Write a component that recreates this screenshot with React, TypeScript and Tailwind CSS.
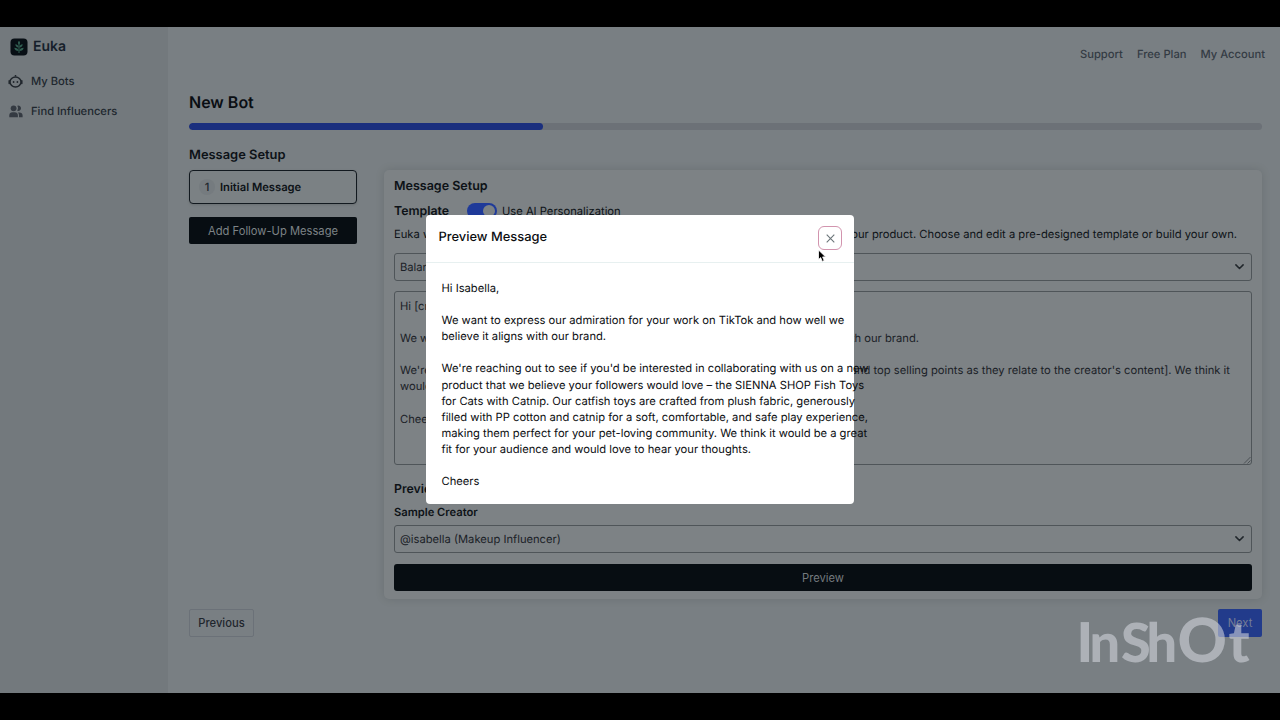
import React, { useState } from 'react';

const navLinks = ['Support', 'Free Plan', 'My Account'];

function LogoIcon() {
  return (
    <svg className="w-[18px] h-[18px]" viewBox="0 0 18 18" fill="none">
      <rect x="0.5" y="0.5" width="17" height="17" rx="4" fill="#080f15" />
      <path d="M9 15V4" stroke="#315f52" strokeWidth="1" />
      <path
        d="M9 2.8c1.3 1.3 1.3 2.6 0 4-1.3-1.4-1.3-2.7 0-4zM8.6 9.4C6.6 9.3 5.4 8.2 5.3 6.2c2 .1 3.2 1.2 3.3 3.2zM9.4 9.4c2-.1 3.2-1.2 3.3-3.2-2 .1-3.2 1.2-3.3 3.2zM8.6 13C6.2 13 4.7 11.9 4.3 9.7c2.4 0 4 1.1 4.3 3.3zM9.4 13c2.4 0 3.9-1.1 4.3-3.3-2.4 0-4 1.1-4.3 3.3z"
        fill="#315f52"
      />
    </svg>
  );
}

function BotIcon() {
  return (
    <svg className="w-[15px] h-[15px]" viewBox="0 0 15 15" fill="none" stroke="#20262c">
      <path d="M7.5 2.5V1" strokeWidth="1.5" />
      <ellipse cx="7.5" cy="8" rx="5.5" ry="5" strokeWidth="1.5" />
      <path d="M1.2 6.8v2.6M13.8 6.8v2.6" strokeWidth="1.5" strokeLinecap="round" />
      <circle cx="5.6" cy="8" r="0.9" fill="#20262c" stroke="none" />
      <circle cx="9.4" cy="8" r="0.9" fill="#20262c" stroke="none" />
    </svg>
  );
}

function PeopleIcon() {
  return (
    <svg className="w-[15px] h-[15px]" viewBox="0 0 15 15" fill="#343a42">
      <circle cx="5.6" cy="4.3" r="2.9" />
      <path d="M1.3 13.2v-1.7c0-2 1.3-3.2 3.2-3.2h2.2c1.9 0 3.2 1.2 3.2 3.2v1.7z" />
      <path d="M9.3 1.8a2.7 2.7 0 1 1 0 5 4.2 4.2 0 0 0 0-5z" />
      <path d="M9.9 8.400h1.400c2.100 0 3.300 1.200 3.300 3.100v1.700h-3.600v-1.700c0-1.300-.3-2.300-1.100-3.100z" />
    </svg>
  );
}

function Chevron() {
  return (
    <svg className="w-[9px] h-[6px]" viewBox="0 0 9 6" fill="none" stroke="#20262b" strokeWidth="1.5">
      <path d="M0.9 0.9 4.5 4.5 8.1 0.9" strokeLinecap="round" strokeLinejoin="round" />
    </svg>
  );
}

function SelectBox({ label }: { label: string }) {
  return (
    <div className="h-[28px] border border-[#4f5559] rounded-[3px] pl-[5px] pr-[7px] flex items-center justify-between text-[#1b2127]">
      <span>{label}</span>
      <Chevron />
    </div>
  );
}

function Sidebar() {
  return (
    <aside className="w-[168px] shrink-0 bg-[#73797d] text-[#20272e]">
      <div className="flex items-center gap-[5px] h-[40px] pl-[10px]">
        <LogoIcon />
        <span className="text-[14px] font-semibold text-[#161f2b]">Euka</span>
      </div>
      <nav className="font-medium">
        <a className="flex items-center gap-2 h-[30px] pl-[8px] -mt-px">
          <BotIcon />
          My Bots
        </a>
        <a className="flex items-center gap-2 h-[30px] pl-[8px]">
          <PeopleIcon />
          Find Influencers
        </a>
      </nav>
    </aside>
  );
}

function TemplateText() {
  return (
    <div className="relative h-[174px] mt-[10px] border border-[#4f5559] rounded-[3px] pl-[5px] pt-[6px] leading-[16.1px] text-[#1b2127] whitespace-nowrap">
      <p>Hi [creator name],</p>
      <br />
      <p className="flex justify-between w-[519px]">
        <span>We want to express our admiration for your work and how well</span>
        <span>it aligns with our brand.</span>
      </p>
      <br />
      <p className="flex justify-between w-[830px]">
        <span>We're reaching out to see if you'd be interested in collaborating with us on</span>
        <span>[product and top selling points as they relate to the creator's content]. We think it</span>
      </p>
      <p>would be a great fit for your audience.</p>
      <br />
      <p>Cheers</p>
      <svg className="absolute right-0 bottom-0 w-[8px] h-[8px]" viewBox="0 0 8 8" stroke="#3f4549" strokeWidth="0.8">
        <path d="M1 7.5 7.5 1M4.5 7.5l3-3" />
      </svg>
    </div>
  );
}

function PreviewModal({ onClose }: { onClose: () => void }) {
  return (
    <div className="absolute left-[426px] top-[215px] w-[428px] h-[289px] bg-white rounded-[4px] text-[#0b0d10]">
      <div className="h-[48px] border-b border-[#e7f0f0] flex items-center justify-between pl-[12.5px] pr-[12px]">
        <h3 className="text-[12.9px] font-medium -mt-0.5">Preview Message</h3>
        <button
          onClick={onClose}
          className="w-6 h-6 rounded-[6px] border-[1.5px] border-[#d294ae] flex items-center justify-center -mt-px"
        >
          <svg className="w-[9px] h-[9px]" viewBox="0 0 9 9" stroke="#6b7579" strokeWidth="1.1">
            <path d="M0.7 0.7 8.3 8.3M8.3 0.7 0.7 8.3" />
          </svg>
        </button>
      </div>
      <div className="pl-[15.5px] pt-[17px] leading-[16.1px] whitespace-nowrap">
        <p>Hi Isabella,</p>
        <br />
        <p>We want to express our admiration for your work on TikTok and how well we</p>
        <p>believe it aligns with our brand.</p>
        <br />
        <p>We're reaching out to see if you'd be interested in collaborating with us on a new</p>
        <p>product that we believe your followers would love – the SIENNA SHOP Fish Toys</p>
        <p>for Cats with Catnip. Our catfish toys are crafted from plush fabric, generously</p>
        <p>filled with PP cotton and catnip for a soft, comfortable, and safe play experience,</p>
        <p>making them perfect for your pet-loving community. We think it would be a great</p>
        <p>fit for your audience and would love to hear your thoughts.</p>
        <br />
        <p>Cheers</p>
      </div>
    </div>
  );
}

export default function App() {
  const [showPreview, setShowPreview] = useState(true);

  return (
    <div className="relative w-[1280px] h-[720px] overflow-hidden bg-black py-[27px] font-['Inter',sans-serif] text-[11.2px] leading-[16px] [text-rendering:geometricPrecision]">
      <div className="flex h-[666px] bg-[#797f83]">
        <Sidebar />

        <main className="flex-1 pl-[21px] pr-[18px] text-[#0d1217]">
          <header className="h-[54px] flex items-center justify-end gap-[14px] -mr-[3px] font-medium text-[#343b43]">
            {navLinks.map((link) => (
              <a key={link}>{link}</a>
            ))}
          </header>

          <h1 className="h-[42px] pt-[11px] text-[16px] leading-[20px] font-semibold text-[#0a0e13]">New Bot</h1>
          <div className="h-[7px] rounded-full bg-[#6c7177] overflow-hidden">
            <div className="h-full w-[33%] rounded-full bg-[#1b2f7e]" />
          </div>

          <div className="flex gap-[27px] mt-[13px]">
            {/* Message list */}
            <div className="w-[168px] shrink-0 pt-[5px]">
              <h2 className="text-[12.9px] font-semibold">Message Setup</h2>
              <div className="h-[34px] mt-[6px] border-[1.5px] border-[#12191f] rounded-[4px] bg-[#7b8184] flex items-center pl-[9px] gap-[5px] shadow">
                <span className="w-[16px] h-[16px] rounded-full bg-[#757b7f] flex items-center justify-center font-medium text-[#20272e]">1</span>
                <span className="font-semibold">Initial Message</span>
              </div>
              <button className="w-full h-[27px] mt-[13px] rounded-[2px] bg-[#070d12] text-[#7d8386]">
                Add Follow-Up Message
              </button>
            </div>

            {/* Editor card */}
            <section className="flex-1 h-[429px] mt-[27px] rounded-[5px] bg-[#7d8285] px-[10px] pt-[8px] shadow-[0_0_10px_rgba(0,0,0,0.12)]">
              <h2 className="h-[18px] leading-[18px] text-[12.5px] font-semibold">Message Setup</h2>
              <div className="h-[30px] flex items-center">
                <span className="w-[73px] text-[12.3px] font-semibold">Template</span>
                <span className="w-[30px] h-[16px] rounded-full bg-[#1f3a99] flex items-center justify-end pr-[2px]">
                  <span className="w-[12px] h-[12px] rounded-full bg-[#7d8285]" />
                </span>
                <span className="ml-[5px]">Use AI Personalization</span>
              </div>
              <div className="h-[27px] flex justify-between w-[843px] whitespace-nowrap">
                <span>Euka will automatically personalize your messages based on</span>
                <span>the creator and your product. Choose and edit a pre-designed template or build your own.</span>
              </div>
              <SelectBox label="Balanced" />
              <TemplateText />
              <h3 className="mt-[16px] text-[12.3px] font-semibold">Preview</h3>
              <div className="h-[22px] mt-[7px] font-semibold">Sample Creator</div>
              <div className="-mt-[1px]">
                <SelectBox label="@isabella (Makeup Influencer)" />
              </div>
              <button
                onClick={() => setShowPreview(true)}
                className="w-full h-[27px] mt-[11px] rounded-[3px] bg-[#070d12] text-[#747a7e]"
              >
                Preview
              </button>
            </section>
          </div>

          <div className="flex justify-between mt-[10px]">
            <button className="w-[65px] h-[28px] rounded-[2px] border border-[#6b7178] font-medium text-[#1f262d]">
              Previous
            </button>
            <button className="w-[44px] h-[28px] rounded-[2px] bg-[#223b8b] text-[#757d96]">Next</button>
          </div>
        </main>
      </div>

      {showPreview && <PreviewModal onClose={() => setShowPreview(false)} />}

      {/* Mouse cursor */}
      <svg className="absolute left-[817px] top-[249px] w-[10px] h-[14px]" viewBox="0 0 10 14">
        <path d="M1.5 1v9.6l2.2-2 1.5 3.8 2-.8-1.6-3.7h3z" fill="#000" stroke="#fff" strokeWidth="0.8" />
      </svg>

      {/* Watermark */}
      <svg className="absolute left-[1070px] top-[605px] w-[200px] h-[70px]" viewBox="0 0 200 70">
        <g fill="#d2d5dc" fillOpacity="0.58" fontFamily="Lato, sans-serif" fontWeight="900">
          <text y="56.5">
            <tspan x="6.5" fontSize="55">I</tspan>
            <tspan x="19.500" fontSize="54">n</tspan>
            <tspan x="51" fontSize="54">S</tspan>
            <tspan x="76.500" fontSize="54">h</tspan>
            <tspan x="107.500" fontSize="61">O</tspan>
            <tspan x="158.500" fontSize="56">t</tspan>
          </text>
        </g>
      </svg>
    </div>
  );
}
